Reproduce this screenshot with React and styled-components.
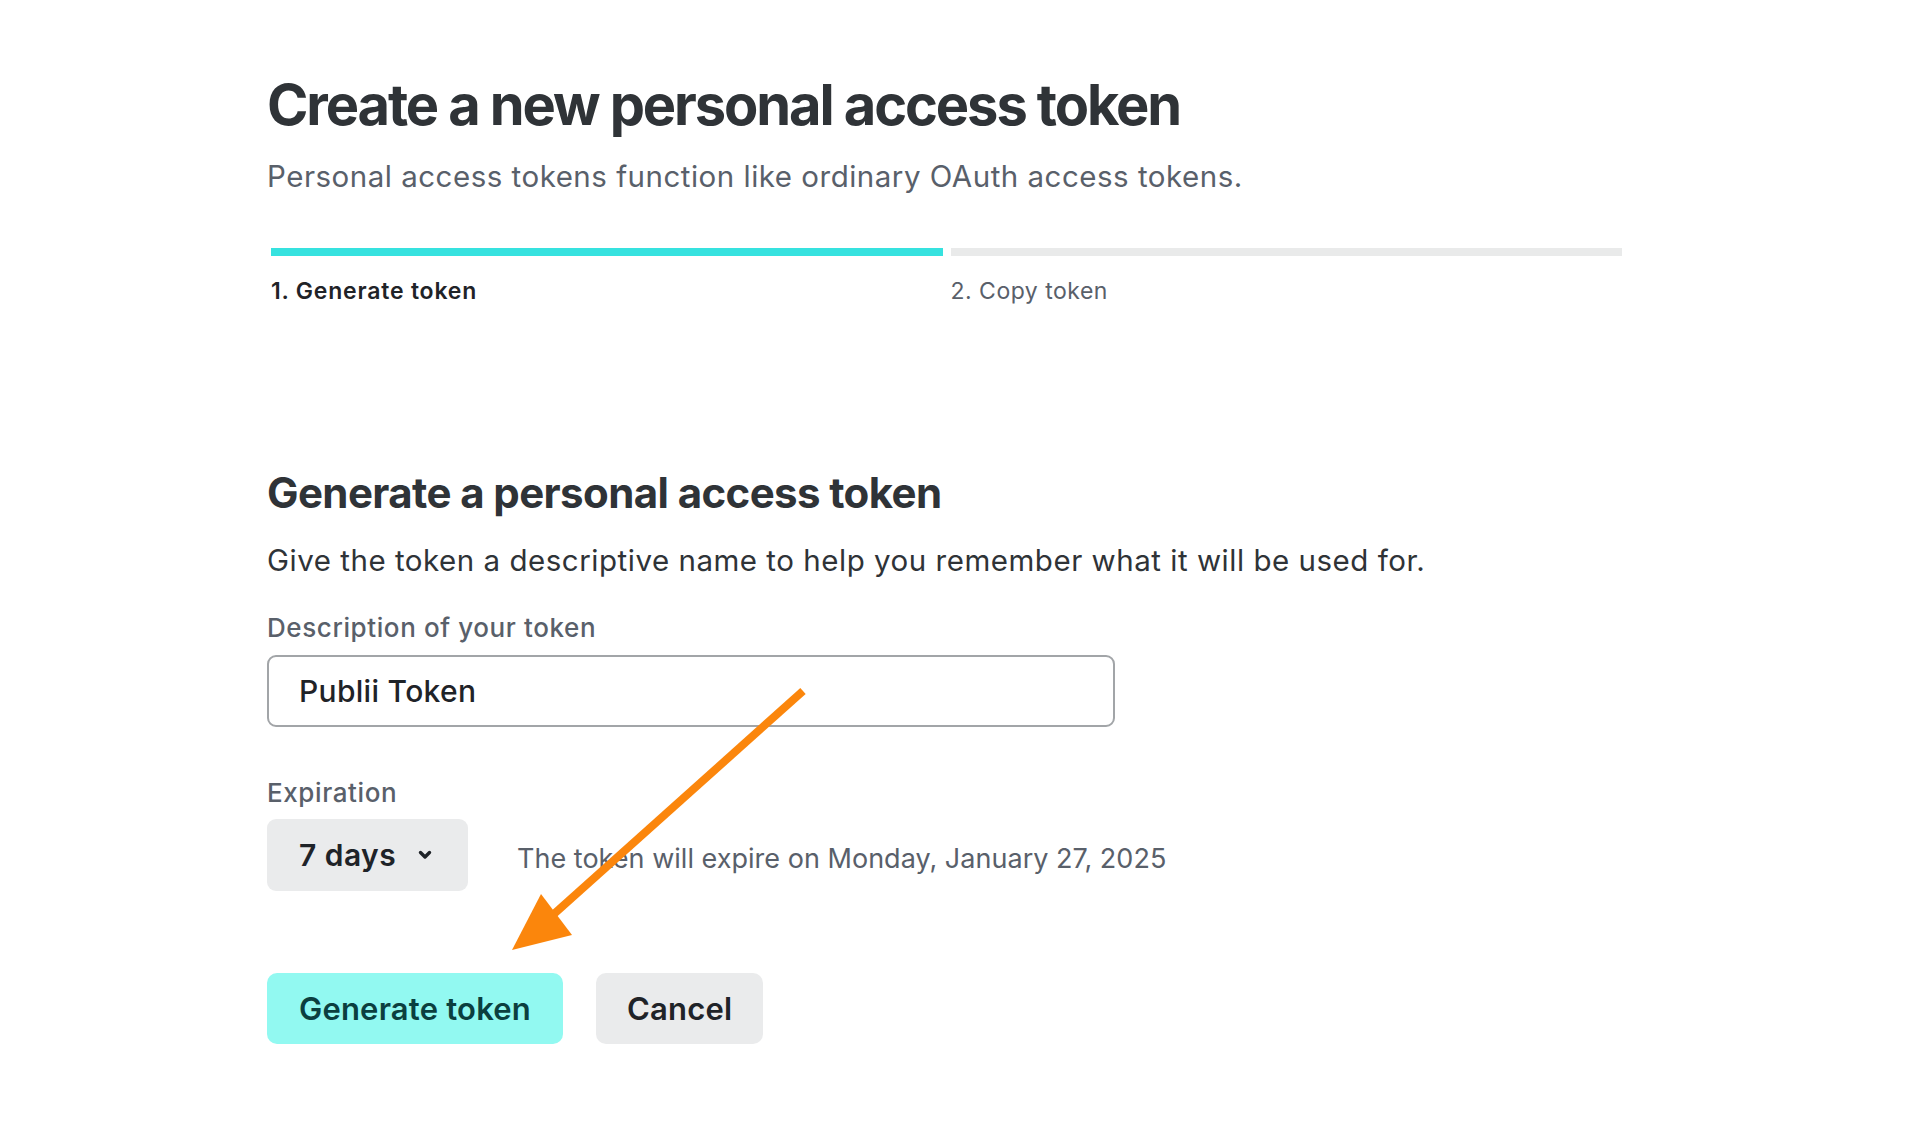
import React from "react";
import styled, { createGlobalStyle } from "styled-components";

const Global = createGlobalStyle`
  html, body { margin: 0; padding: 0; background: #ffffff; }
  body { font-family: Inter, "Liberation Sans", Arial, sans-serif; -webkit-font-smoothing: antialiased; }
  * { box-sizing: border-box; }
`;

const Page = styled.div`
  position: relative;
  width: 1932px;
  height: 1144px;
  padding: 70px 0 0 267px;
  overflow: hidden;
`;

const Title = styled.h1`
  margin: 0;
  font-size: 56px;
  line-height: 70px;
  font-weight: 700;
  letter-spacing: -2.1px;
  color: #2f3337;
`;

const Subtitle = styled.p`
  margin: 18px 0 0;
  font-size: 29.5px;
  line-height: 36px;
  font-weight: 400;
  letter-spacing: 0.5px;
  color: #59606a;
`;

const Steps = styled.div`
  margin: 54px 0 0 4px;
  width: 1351px;
  display: grid;
  grid-template-columns: 1fr 1fr;
  column-gap: 8px;
`;

const Step = styled.div`
  display: flex;
  flex-direction: column;
  gap: 20px;
`;

const Bar = styled.div`
  height: 8px;
  background: ${(p) => (p.$active ? "#36e2df" : "#e9eaea")};
`;

const StepLabel = styled.div`
  font-size: 23px;
  line-height: 30px;
  font-weight: ${(p) => (p.$active ? 600 : 400)};
  letter-spacing: ${(p) => (p.$active ? 0.8 : 0.5)}px;
  color: ${(p) => (p.$active ? "#1f2328" : "#59606a")};
`;

const Section = styled.section`
  margin-top: 161px;
  display: flex;
  flex-direction: column;
`;

const H2 = styled.h2`
  margin: 0;
  font-size: 42px;
  line-height: 52px;
  font-weight: 700;
  letter-spacing: -0.6px;
  color: #2f3337;
`;

const Lead = styled.p`
  margin: 23px 0 0;
  font-size: 29.5px;
  line-height: 36px;
  letter-spacing: 0.52px;
  color: #2f3337;
`;

const Label = styled.label`
  display: block;
  margin-top: ${(p) => p.$top}px;
  font-size: 26px;
  line-height: 32px;
  font-weight: 500;
  letter-spacing: 0.6px;
  color: #59606a;
`;

const Input = styled.div`
  margin-top: 11px;
  width: 848px;
  height: 72px;
  border: 2px solid #a2a5a8;
  border-radius: 9px;
  display: flex;
  align-items: center;
  padding-left: 30px;
  font-size: 30px;
  font-weight: 500;
  letter-spacing: 0.3px;
  color: #1f2328;
`;

const ExpiryRow = styled.div`
  margin-top: 10px;
  display: flex;
  align-items: center;
  gap: 49px;
`;

const Select = styled.div`
  width: 201px;
  height: 72px;
  border-radius: 9px;
  background: #eaebec;
  display: flex;
  align-items: center;
  padding-left: 32px;
  gap: 22px;
  font-size: 30px;
  font-weight: 600;
  letter-spacing: 0.45px;
  color: #1f2328;
`;

const Note = styled.span`
  font-size: 27px;
  letter-spacing: 0.02px;
  color: #59606a;
  padding-top: 7px;
`;

const Actions = styled.div`
  margin-top: 82px;
  display: flex;
  gap: 33px;
`;

const Button = styled.button`
  height: 71px;
  padding: 0 ${(p) => p.$pad}px;
  border: none;
  border-radius: 10px;
  font-family: inherit;
  font-size: 31px;
  font-weight: 600;
  letter-spacing: 0.2px;
  background: ${(p) => (p.$primary ? "#92f9f1" : "#eaebec")};
  color: ${(p) => (p.$primary ? "#0b3f3f" : "#1f2328")};
`;

const Overlay = styled.svg`
  position: absolute;
  left: 0;
  top: 0;
  pointer-events: none;
`;

export default function App() {
  return (
    <>
      <Global />
      <Page>
        <Title>Create a new personal access token</Title>
        <Subtitle>Personal access tokens function like ordinary OAuth access tokens.</Subtitle>
        <Steps>
          <Step>
            <Bar $active />
            <StepLabel $active>1. Generate token</StepLabel>
          </Step>
          <Step>
            <Bar />
            <StepLabel>2. Copy token</StepLabel>
          </Step>
        </Steps>
        <Section>
          <H2>Generate a personal access token</H2>
          <Lead>Give the token a descriptive name to help you remember what it will be used for.</Lead>
          <Label $top={34}>Description of your token</Label>
          <Input>Publii Token</Input>
          <Label $top={50}>Expiration</Label>
          <ExpiryRow>
            <Select>
              <span>7 days</span>
              <svg width="14" height="10" viewBox="0 0 14 10">
                <polyline points="2.5,2.5 7,7 11.5,2.5" fill="none" stroke="#1f2328" strokeWidth="3.4" strokeLinecap="round" strokeLinejoin="round" />
              </svg>
            </Select>
            <Note>The token will expire on Monday, January 27, 2025</Note>
          </ExpiryRow>
          <Actions>
            <Button $primary $pad={32}>Generate token</Button>
            <Button $pad={31}>Cancel</Button>
          </Actions>
        </Section>
        <Overlay width="1932" height="1144" viewBox="0 0 1932 1144">
          <line x1="803" y1="691" x2="545" y2="922" stroke="#fb860c" strokeWidth="8" />
          <polygon points="512,950 541,894 572,935" fill="#fb860c" />
        </Overlay>
      </Page>
    </>
  );
}
